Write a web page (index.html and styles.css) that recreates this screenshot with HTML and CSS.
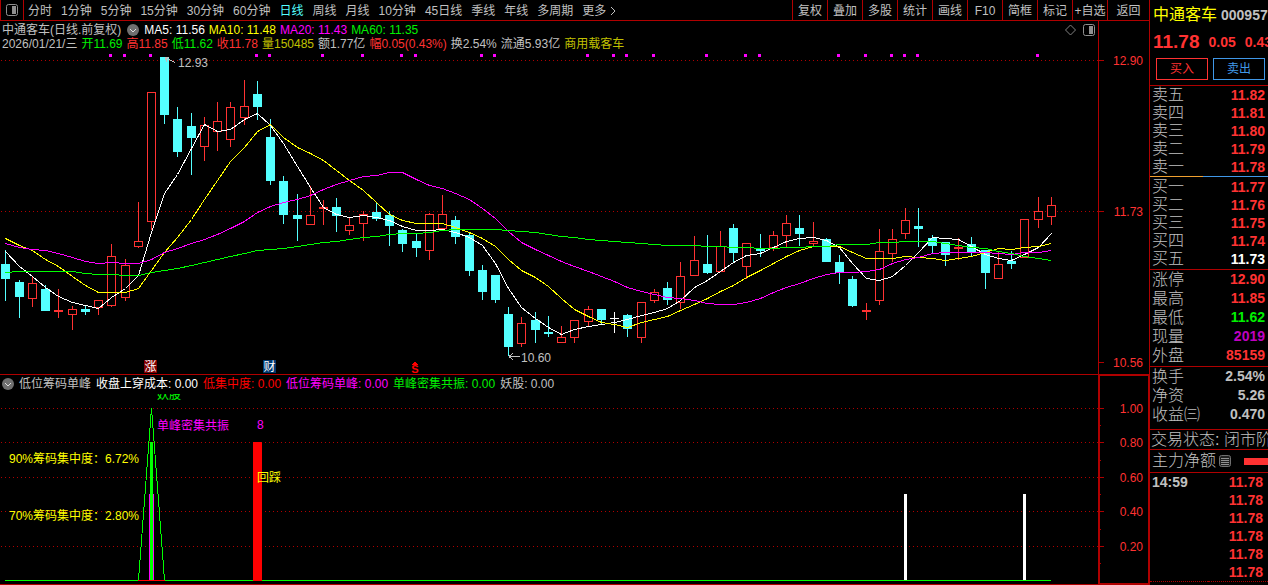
FILE: index.html
```html
<!DOCTYPE html>
<html lang="zh-CN">
	<head>
		<meta charset="UTF-8">
		<title>中通客车 000957</title>
		<link rel="stylesheet" href="styles.css">
	</head>
	<body>
		<div id="app">
			<main class="main">
				<nav class="toolbar">
					<button class="toggle" aria-label="panel">
						<svg width="12" height="12" viewBox="0 0 12 12"><rect x="0.5" y="0.5" width="11" height="11" rx="2" fill="none" stroke="#909090"/><rect x="6" y="2" width="4" height="8" fill="#909090"/></svg>
					</button>
					<div class="periods">
						<button>分时</button>
						<button>1分钟</button>
						<button>5分钟</button>
						<button>15分钟</button>
						<button>30分钟</button>
						<button>60分钟</button>
						<button class="active">日线</button>
						<button>周线</button>
						<button>月线</button>
						<button>10分钟</button>
						<button>45日线</button>
						<button>季线</button>
						<button>年线</button>
						<button>多周期</button>
						<button class="more">更多
							<svg width="6" height="10" viewBox="0 0 6 10"><path d="M1 1l4 4-4 4" fill="none" stroke="#c0c0c0"/></svg>
						</button>
					</div>
					<div class="tools">
						<button>复权</button>
						<button>叠加</button>
						<button>多股</button>
						<button>统计</button>
						<button>画线</button>
						<button>F10</button>
						<button>简框</button>
						<button>标记</button>
						<button>+自选</button>
						<button class="back">返回</button>
					</div>
				</nav>

				<section class="pane kline">
					<div class="plot">
						<div class="info">
							<div class="line">
								<span>中通客车(日线.前复权)</span>
								<svg class="drop" width="12" height="12" viewBox="0 0 12 12"><circle cx="6" cy="6" r="6" fill="#707070"/><path d="M3 5l3 3 3-3" fill="none" stroke="#ddd"/></svg>
								<span class="white">MA5: 11.56</span>
								<span class="yellow">MA10: 11.48</span>
								<span class="magenta">MA20: 11.43</span>
								<span class="green">MA60: 11.35</span>
								<svg class="corner" width="30" height="12" viewBox="0 0 30 12"><path d="M5.5 1l5 5-5 5-5-5z" fill="none" stroke="#808080"/><rect x="18.5" y="0.5" width="11" height="11" rx="2" fill="none" stroke="#909090"/><rect x="24" y="2" width="4" height="8" fill="#909090"/></svg>
							</div>
							<div class="line">
								<span>2026/01/21/三</span>
								<span class="green">开11.69</span>
								<span class="red">高11.85</span>
								<span class="green">低11.62</span>
								<span class="red">收11.78</span>
								<span class="olive">量150485</span>
								<span>额1.77亿</span>
								<span class="red">幅0.05(0.43%)</span>
								<span>换2.54%</span>
								<span>流通5.93亿</span>
								<span class="olive">商用载客车</span>
							</div>
						</div>
						<svg class="chart" height="323" viewBox="0 51 1098 323" preserveAspectRatio="xMinYMin meet">
							<path class="grid" d="M1 60.5H1098M1 211.5H1098"/>
							<g id="signals"></g>
							<g id="candles"></g>
							<g id="averages"></g>
							<path class="arrow" d="M165 57.5L170 60L175 62.5M165 57.5h4M165 57.5l2 4"/>
							<text class="note" x="178" y="67">12.93</text>
							<path class="arrow" d="M509 356.5H520M509 356.5l4-3M509 356.5l4 3"/>
							<text class="note" x="521" y="362">10.60</text>
							<rect x="144" y="360" width="13" height="13" fill="#800000"/>
							<text class="badge" x="150.5" y="371">涨</text>
							<rect x="263" y="360" width="13" height="13" fill="#003870"/>
							<text class="badge" x="269.5" y="371">财</text>
							<path d="M412 365l3-4 3 4z" fill="#ff0000"/>
							<text class="split" x="415" y="373">S</text>
						</svg>
					</div>
					<svg class="axis" width="52" height="353" viewBox="0 0 52 353">
						<path class="frame" d="M0.5 0V353M51.5 0V353M0 39.5H6M0 190.5H6M0 341.5H6"/>
						<text x="45" y="44">12.90</text>
						<text x="45" y="195">11.73</text>
						<text x="45" y="346">10.56</text>
					</svg>
				</section>

				<section class="pane sub">
					<div class="plot">
						<div class="legend">
							<svg class="drop" width="12" height="12" viewBox="0 0 12 12"><circle cx="6" cy="6" r="6" fill="#707070"/><path d="M3 5l3 3 3-3" fill="none" stroke="#ddd"/></svg>
							<span>低位筹码单峰</span>
							<span class="white">收盘上穿成本: 0.00</span>
							<span class="pure">低集中度: 0.00</span>
							<span class="magenta">低位筹码单峰: 0.00</span>
							<span class="green">单峰密集共振: 0.00</span>
							<span>妖股: 0.00</span>
						</div>
						<svg class="chart" height="190" viewBox="0 394 1098 190" preserveAspectRatio="xMinYMin meet">
							<path class="grid" d="M1 408.5H1098M1 442.5H1098M1 477.5H1098M1 511.5H1098M1 546.5H1098"/>
							<path d="M5 580.5H1051" stroke="#00ff00"/>
							<path d="M138 580.5H165" stroke="#ff0000"/>
							<rect x="149" y="494" width="5" height="86" fill="#ff00ff"/>
							<rect x="150" y="442" width="3" height="138" fill="#00ff00"/>
							<path d="M138.5 580L151.5 408L164.5 580" fill="none" stroke="#00ff00"/>
							<rect x="253" y="442" width="9" height="139" fill="#ff0000"/>
							<rect x="904" y="494" width="3" height="86" fill="#fff"/>
							<rect x="1023" y="494" width="3" height="86" fill="#fff"/>
							<text x="157" y="399" fill="#00ff00">妖股</text>
							<text x="157" y="430" fill="#ff00ff">单峰密集共振</text>
							<text x="257" y="429" fill="#ff00ff">8</text>
							<text x="257" y="482" fill="#ffff00">回踩</text>
							<text x="9" y="463" fill="#ffff00">90%筹码集中度：6.72%</text>
							<text x="9" y="520" fill="#ffff00">70%筹码集中度：2.80%</text>
						</svg>
					</div>
					<svg class="axis" width="52" height="209" viewBox="0 375 52 209">
						<path class="frame thick" d="M1 375V584M51 375V584"/>
						<path class="frame" d="M0 375.5H52M0 583.5H52M0 408.5H6M0 442.5H6M0 477.5H6M0 511.5H6M0 546.5H6M0 425.5H3M0 460.5H3M0 494.5H3M0 529.5H3M0 563.5H3"/>
						<text x="45" y="413">1.00</text>
						<text x="45" y="447">0.80</text>
						<text x="45" y="482">0.60</text>
						<text x="45" y="516">0.40</text>
						<text x="45" y="551">0.20</text>
					</svg>
				</section>
			</main>

			<aside class="side">
				<header class="head">
					<div class="name"><h1>中通客车</h1><b>000957</b></div>
					<div class="price"><strong>11.78</strong><b>0.05</b><b>0.43%</b></div>
					<div class="trade">
						<button class="buy">买入</button>
						<button class="sell">卖出</button>
					</div>
				</header>
				<table class="quotes">
					<tr><th>卖五</th><td>11.82</td></tr>
					<tr><th>卖四</th><td>11.81</td></tr>
					<tr><th>卖三</th><td>11.80</td></tr>
					<tr><th>卖二</th><td>11.79</td></tr>
					<tr><th>卖一</th><td>11.78</td></tr>
				</table>
				<div class="ratio"><i></i></div>
				<table class="quotes">
					<tr><th>买一</th><td>11.77</td></tr>
					<tr><th>买二</th><td>11.76</td></tr>
					<tr><th>买三</th><td>11.75</td></tr>
					<tr><th>买四</th><td>11.74</td></tr>
					<tr><th>买五</th><td class="white">11.73</td></tr>
				</table>
				<table class="quotes stats">
					<tr><th>涨停</th><td>12.90</td></tr>
					<tr><th>最高</th><td>11.85</td></tr>
					<tr><th>最低</th><td class="green">11.62</td></tr>
					<tr><th>现量</th><td class="purple">2019</td></tr>
					<tr><th>外盘</th><td>85159</td></tr>
				</table>
				<table class="quotes stats">
					<tr><th>换手</th><td class="gray">2.54%</td></tr>
					<tr><th>净资</th><td class="gray">5.26</td></tr>
					<tr><th>收益㈢</th><td class="gray">0.470</td></tr>
				</table>
				<p class="state">交易状态: 闭市阶段</p>
				<div class="flow">
					<span>主力净额</span>
					<svg width="12" height="12" viewBox="0 0 12 12"><rect x="0.5" y="0.5" width="11" height="11" rx="2" fill="#202020" stroke="#707070"/><path d="M2 3.5h8M2 5.5h8M2 7.5h8M2 9.5h8" stroke="#909090"/></svg>
					<i></i>
				</div>
				<table class="quotes ticks">
					<tr><th>14:59</th><td>11.78</td></tr>
					<tr><th></th><td>11.78</td></tr>
					<tr><th></th><td>11.78</td></tr>
					<tr><th></th><td>11.78</td></tr>
					<tr><th></th><td>11.78</td></tr>
					<tr><th></th><td>11.78</td></tr>
				</table>
			</aside>
		</div>
		<script src="script.js"></script>
	</body>
</html>
```

FILE: styles.css
```css
*{
	margin: 0;
	padding: 0;
	box-sizing: border-box;
}
body{
	background: #000;
	color: #c0c0c0;
	font: 12px/14px "Liberation Sans", "Noto Sans CJK SC", sans-serif;
	overflow: hidden;
}
button{
	background: none;
	border: 0;
	color: inherit;
	font: inherit;
	white-space: nowrap;
}
svg{
	display: block;
	flex: none;
}
#app{
	display: flex;
	min-height: 100vh;
}
.main{
	flex: 1;
	min-width: 0;
}
/* 颜色 */
.white{ color: #fff; }
.yellow{ color: #ffff00; }
.magenta{ color: #ff00ff; }
.green{ color: #00f000; }
.red{ color: #ff3232; }
.pure{ color: #ff0000; }
.olive{ color: #c0c000; }
/* 顶部工具栏 */
.toolbar{
	display: flex;
	height: 21px;
	border-bottom: 1px solid #b00000;
}
.toggle{
	width: 24px;
	padding: 0 5px;
	border: solid #b00000;
	border-width: 0 1px;
}
.periods{
	display: flex;
	flex: 1;
	gap: 9px;
	padding-left: 4px;
}
.periods button,
.tools button{
	padding-top: 2px;
}
.periods .active{
	color: #54ffff;
}
.periods .more{
	display: flex;
	align-items: center;
	gap: 4px;
}
.tools{
	display: flex;
	border-right: 1px solid #b00000;
}
.tools button{
	width: 35px;
	border-left: 1px solid #b00000;
}
.tools .back{
	width: 42px;
}
/* K线 */
.pane{
	display: flex;
	border-bottom: 1px solid #b00000;
}
.plot{
	flex: 1;
	min-width: 0;
}
.info{
	height: 30px;
	padding: 2px 3px 0 2px;
}
.line,
.legend{
	display: flex;
	align-items: center;
	gap: 4px;
	white-space: nowrap;
}
.line .drop{
	margin: 0 1px 0 2px;
}
.line .corner{
	margin-left: auto;
}
.legend{
	height: 19px;
	gap: 5px;
	padding: 0 2px 2px;
}
.chart{
	width: 100%;
}
.chart text,
.axis text{
	font-size: 12px;
}
.chart path,
.chart rect,
.chart polyline,
.axis path{
	shape-rendering: crispEdges;
}
.grid{
	stroke: #b00000;
	stroke-dasharray: 1 3;
}
.frame{
	fill: none;
	stroke: #b00000;
}
.thick{
	stroke-width: 2;
}
.axis text{
	fill: #ff3232;
	text-anchor: end;
}
.up{
	fill: #000;
	stroke: #ff3232;
}
.arrow{
	fill: none;
	stroke: #c0c0c0;
}
.note{
	fill: #c0c0c0;
}
.badge{
	fill: #fff;
	text-anchor: middle;
}
.chart .split{
	fill: #ff0000;
	font-weight: bold;
	font-size: 11px;
	text-anchor: middle;
}
/* 右侧盘口 */
.side{
	width: 118px;
	overflow: hidden;
	font-size: 16px;
	font-weight: 300;
	white-space: nowrap;
}
.head{
	height: 86px;
	border-bottom: 1px solid #b00000;
}
.name,
.price{
	display: flex;
	align-items: center;
	padding-left: 3px;
}
.name{
	height: 30px;
	gap: 4px;
}
.name h1{
	color: #ffff00;
	font-size: 16px;
	font-weight: 400;
}
.side b{
	font-size: 14px;
	font-weight: bold;
}
.price{
	height: 24px;
	gap: 9px;
	color: #ff3232;
}
.price strong{
	font-size: 19px;
	font-weight: bold;
}
.trade{
	display: flex;
	gap: 5px;
	padding: 4px 3px 0 6px;
}
.trade button{
	flex: 1;
	height: 22px;
	border: 1px solid #ff3232;
	color: #ff3232;
	font-size: 12px;
	font-weight: 400;
}
.trade .sell{
	border-color: #4098e8;
	color: #4098e8;
}
.quotes{
	width: 100%;
	border-collapse: collapse;
	line-height: 18px;
}
.quotes th{
	height: 18px;
	padding-left: 2px;
	font-weight: 300;
	text-align: left;
}
.quotes td{
	padding-right: 3px;
	color: #ff3232;
	font-size: 14px;
	font-weight: bold;
	text-align: right;
}
.quotes .white{ color: #fff; }
.quotes .green{ color: #00f000; }
.quotes .purple{ color: #c000c0; }
.quotes .gray{ color: #c0c0c0; }
.ratio{
	height: 2px;
	background: linear-gradient(#4098e8 1px, transparent 1px);
}
.ratio i{
	display: block;
	width: 45%;
	height: 1px;
	background: #f0a030;
}
.stats{
	margin-top: 1px;
	border-top: 1px solid #b00000;
	line-height: 19px;
}
.stats th{
	height: 19px;
}
.state{
	height: 20px;
	margin-top: 5px;
	padding-left: 1px;
	border-top: 1px solid #b00000;
	line-height: 19px;
}
.flow{
	display: flex;
	align-items: center;
	height: 24px;
	padding-left: 2px;
	border: solid #b00000;
	border-width: 1px 0;
}
.flow svg{
	margin-left: 3px;
}
.flow i{
	flex: 1;
	height: 7px;
	margin-left: 13px;
	background: #ff3232;
}
.ticks{
	border-bottom: 1px dotted #b00000;
}
.quotes.ticks th{
	font-size: 14px;
	font-weight: bold;
}
.quotes.ticks td{
	padding-right: 5px;
}
```

FILE: script.js
```js
var NS = 'http://www.w3.org/2000/svg';
// 最高, 实体上沿, 实体下沿, 最低, 类型(r涨 c跌 w平)
var bars = [
	[250,264,279,301,'c'],[280,282,297,318,'c'],[277,283,299,307,'r'],[285,289,311,311,'c'],
	[289,310,312,318,'r'],[306,309,315,330,'r'],[305,309,312,315,'c'],[300,300,308,315,'r'],
	[244,256,306,307,'r'],[259,265,298,301,'r'],[202,241,247,248,'r'],[92,92,222,230,'r'],
	[57,57,115,124,'c'],[107,119,152,157,'c'],[113,126,138,175,'c'],[117,125,147,161,'r'],
	[102,121,132,151,'r'],[102,107,140,147,'r'],[80,106,118,125,'r'],[81,94,107,120,'c'],
	[119,137,181,185,'c'],[176,181,215,224,'c'],[194,215,219,241,'c'],[186,215,225,225,'r'],
	[200,207,209,225,'r'],[198,207,216,232,'c'],[218,225,231,235,'r'],[211,214,224,241,'r'],
	[202,212,219,221,'c'],[211,215,226,246,'c'],[229,230,244,252,'c'],[234,241,248,257,'c'],
	[213,214,251,260,'r'],[195,214,229,229,'r'],[216,220,237,244,'c'],[233,235,271,276,'c'],
	[265,270,292,300,'c'],[275,275,300,303,'c'],[307,314,347,356,'c'],[317,323,344,347,'r'],
	[312,320,330,343,'c'],[316,332,334,337,'c'],[326,337,343,343,'r'],[320,320,338,343,'r'],
	[306,309,322,327,'r'],[309,309,320,324,'c'],[312,318,319,333,'w'],[314,315,329,337,'c'],
	[302,302,338,343,'r'],[289,292,301,303,'r'],[282,288,300,305,'c'],[262,276,303,309,'r'],
	[236,260,276,276,'r'],[235,264,273,274,'c'],[231,246,272,272,'r'],[224,228,253,262,'c'],
	[243,243,267,279,'r'],[234,249,251,257,'c'],[231,235,248,251,'r'],[215,223,236,247,'r'],
	[215,228,234,246,'c'],[222,241,244,246,'r'],[238,239,262,262,'c'],[255,262,273,284,'c'],
	[276,279,306,307,'c'],[303,310,312,320,'r'],[229,251,301,305,'r'],[229,239,254,262,'r'],
	[208,220,234,239,'r'],[208,226,229,247,'c'],[235,238,246,253,'c'],[242,242,255,266,'c'],
	[238,247,249,260,'r'],[237,244,253,256,'c'],[250,250,273,289,'c'],[251,264,279,279,'r'],
	[251,261,264,269,'c'],[219,219,258,258,'r'],[197,211,220,228,'r'],[197,205,217,225,'r']
];
var ma5 = [251,266,276,287,296,302,305,308,297,288,275,232,193,174,148,124,131,129,119,113,125,143,166,187,207,214,217,215,217,220,226,230,230,229,232,237,245,263,288,307,318,327,334,329,326,324,322,319,315,312,308,300,287,280,271,262,255,253,247,241,238,237,240,247,263,278,280,276,265,252,237,238,239,246,254,258,260,254,247,233];
var ma10 = [238,245,250,259,266,276,285,292,292,292,288,270,252,237,219,199,180,161,147,131,124,137,147,153,160,170,180,190,202,214,220,223,223,223,227,232,238,246,259,270,277,286,298,309,316,322,324,327,322,319,316,310,304,298,291,285,277,270,263,256,250,246,246,246,252,258,258,258,256,257,258,260,258,256,252,248,249,247,246,243];
var ma20 = [243,247,249,250,253,257,261,263,262,263,263,259,252,248,243,239,234,228,221,212,206,202,199,195,189,184,180,176,175,172,172,179,185,188,193,199,208,218,231,242,249,255,261,266,271,276,281,287,291,294,297,298,300,303,304,304,302,298,292,287,283,278,274,272,272,271,269,263,259,257,253,252,252,252,252,253,254,252,252,250];
var ma60 = [272,271,271,271,271,271,273,274,274,275,275,272,270,268,265,262,259,256,253,250,249,248,246,244,242,241,239,237,236,234,233,233,232,230,229,229,229,229,230,231,232,234,236,237,239,240,241,242,243,244,245,245,245,246,246,247,247,248,248,247,247,246,246,244,244,244,242,242,241,241,241,243,245,247,248,251,253,256,258,260];
var signals = [8,9,11,19,20,24,27,30,31,36,37,44,46,47,49,53,56,57,63,65,67,68,69,78];

function getX(i){
	return Math.floor(5.95 + 13.232 * i);
}
function add(id, tag, attrs){
	var el = document.createElementNS(NS, tag);
	for(var k in attrs){
		el.setAttribute(k, attrs[k]);
	}
	document.getElementById(id).appendChild(el);
}
function drawBar(b, i){
	var x = getX(i);
	var color = {r: '#ff3232', c: '#54ffff', w: '#ffffff'}[b[4]];
	//上下影线
	add('candles', 'rect', {x: x, y: b[0], width: 1, height: b[1] - b[0], fill: color});
	add('candles', 'rect', {x: x, y: b[2], width: 1, height: b[3] - b[2], fill: color});
	if(b[4] == 'r' && b[2] - b[1] > 2){
		add('candles', 'rect', {x: x - 3.5, y: b[1] + 0.5, width: 8, height: b[2] - b[1] - 1, 'class': 'up'});
	}else{
		add('candles', 'rect', {x: x - 4, y: b[1], width: 9, height: b[2] - b[1], fill: color});
	}
}
function drawLine(arr, color){
	var pts = arr.map(function(y, i){
		return (getX(i) + 0.5) + ',' + (y + 0.5);
	});
	add('averages', 'polyline', {points: pts.join(' '), fill: 'none', stroke: color});
}
bars.forEach(drawBar);
drawLine(ma5, '#ffffff');
drawLine(ma10, '#ffff00');
drawLine(ma20, '#ff00ff');
drawLine(ma60, '#00ff00');
signals.forEach(function(i){
	add('signals', 'rect', {x: getX(i) - 2, y: 54, width: 3, height: 3, fill: '#ff00ff'});
});
```
